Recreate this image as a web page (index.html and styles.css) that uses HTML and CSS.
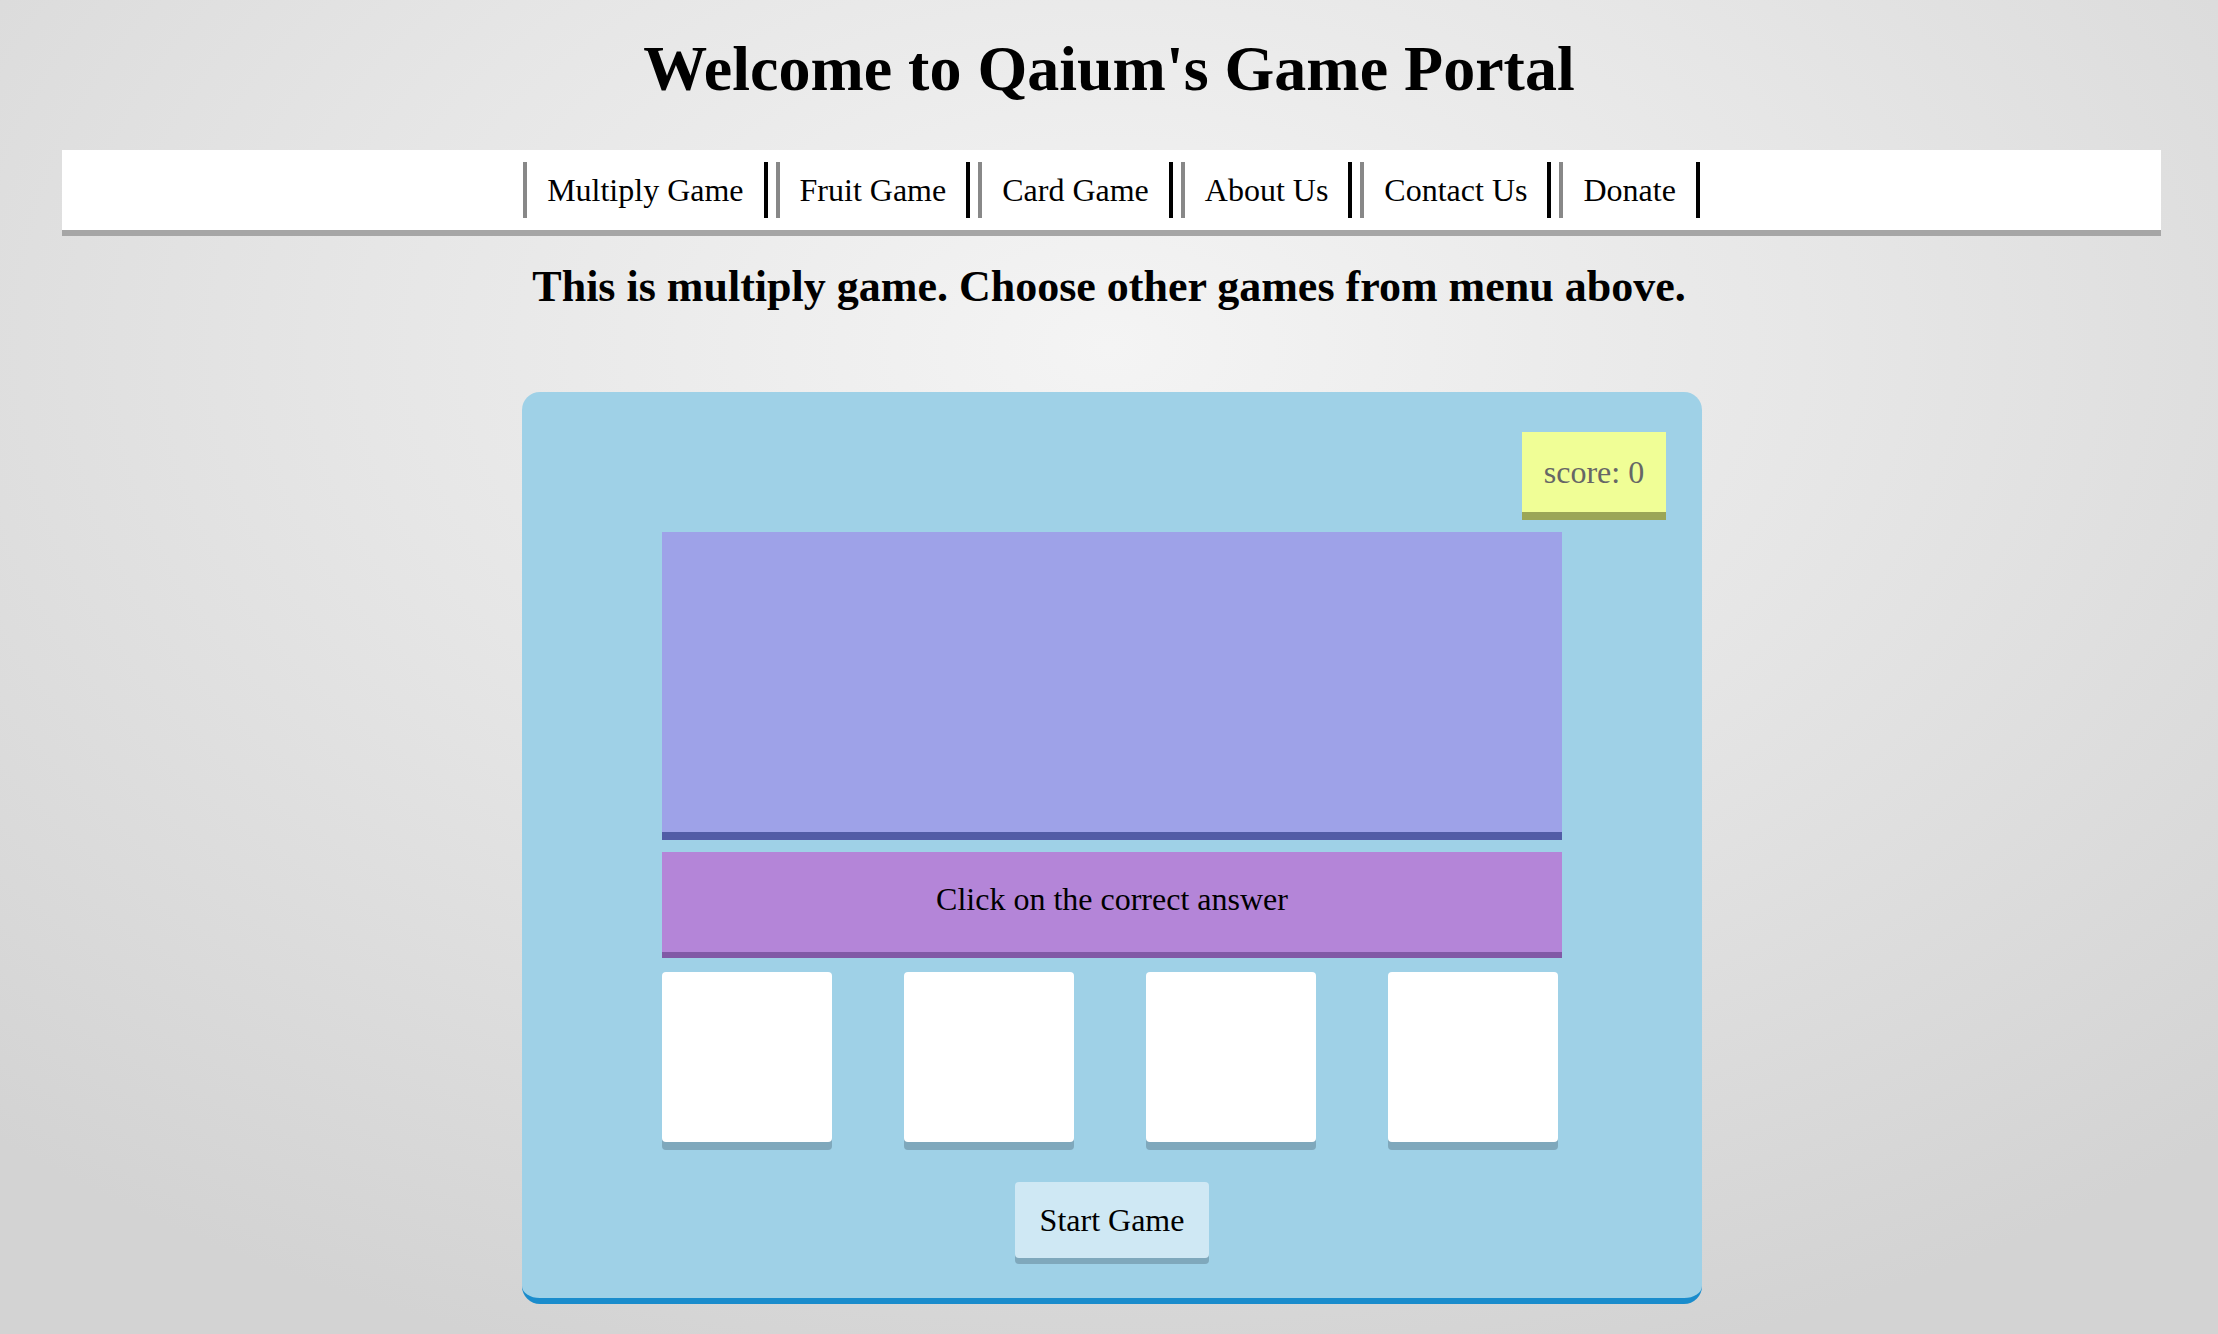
FILE: index.html
```html
<!DOCTYPE html>
<html lang="en">
<head>
<meta charset="utf-8">
<title>Qaium's Game Portal</title>
<link rel="stylesheet" href="styles.css">
</head>
<body>
  <h1 class="title">Welcome to Qaium's Game Portal</h1>
  <nav class="menu">
    <a class="menu-link" href="#">Multiply Game</a>
    <a class="menu-link" href="#">Fruit Game</a>
    <a class="menu-link" href="#">Card Game</a>
    <a class="menu-link" href="#">About Us</a>
    <a class="menu-link" href="#">Contact Us</a>
    <a class="menu-link" href="#">Donate</a>
  </nav>
  <h2 class="subtitle">This is multiply game. Choose other games from menu above.</h2>
  <main class="game">
    <div class="score">score: 0</div>
    <div class="question"></div>
    <div class="instruction">Click on the correct answer</div>
    <div class="choices">
      <div class="choice"></div>
      <div class="choice"></div>
      <div class="choice"></div>
      <div class="choice"></div>
    </div>
    <div class="start">Start Game</div>
  </main>
</body>
</html>
```
FILE: styles.css
```css
html {
  min-height: 100%;
  background: radial-gradient(ellipse 75% 80% at 50% 26%, #f4f4f4 0%, #e6e6e6 45%, #d3d3d3 100%) fixed;
}

body {
  margin: 0;
  padding: 32px 0 30px;
  font-family: "Liberation Serif", "Times New Roman", serif;
  color: #000;
}

.title {
  margin: 0;
  font-size: 64px;
  font-weight: bold;
  line-height: 74px;
  text-align: center;
}

.menu {
  margin: 44px 57px 0 62px;
  height: 80px;
  background: #fff;
  border-bottom: 6px solid #a6a6a6;
  display: flex;
  justify-content: center;
  align-items: center;
  gap: 8px;
}

.menu-link {
  display: block;
  height: 56px;
  line-height: 56px;
  padding: 0 20px;
  font-size: 32px;
  color: #000;
  text-decoration: none;
  border-left: 4px solid #888;
  border-right: 4px solid #000;
}

.subtitle {
  margin: 25px 0 0;
  font-size: 44px;
  font-weight: bold;
  line-height: 51px;
  text-align: center;
}

.game {
  width: 1180px;
  margin: 80px 0 0 calc(50% - 587px);
  box-sizing: border-box;
  padding: 40px 0 40px;
  background: #9fd1e7;
  border-bottom: 6px solid #1a8ccc;
  border-radius: 18px;
  display: flex;
  flex-direction: column;
  align-items: center;
}

.score {
  align-self: flex-end;
  margin-right: 36px;
  width: 144px;
  height: 80px;
  line-height: 80px;
  text-align: center;
  font-size: 32px;
  color: #666;
  background: #f0fe96;
  border-bottom: 8px solid #9ba657;
}

.question {
  margin-top: 12px;
  width: 900px;
  height: 300px;
  background: #9ea2e8;
  border-bottom: 8px solid #525ca6;
}

.instruction {
  margin-top: 12px;
  width: 900px;
  height: 100px;
  line-height: 94px;
  text-align: center;
  font-size: 32px;
  background: #b485d8;
  border-bottom: 6px solid #8159a6;
}

.choices {
  margin-top: 14px;
  width: 900px;
  display: flex;
  gap: 72px;
}

.choice {
  width: 170px;
  height: 170px;
  background: #fff;
  border-radius: 4px;
  box-shadow: 0 8px 0 #7fa8bc;
}

.start {
  margin-top: 40px;
  height: 76px;
  line-height: 76px;
  padding: 0 25px;
  font-size: 32px;
  background: #cfe8f4;
  border-radius: 4px;
  box-shadow: 0 6px 0 #7fa8bc;
}
```
